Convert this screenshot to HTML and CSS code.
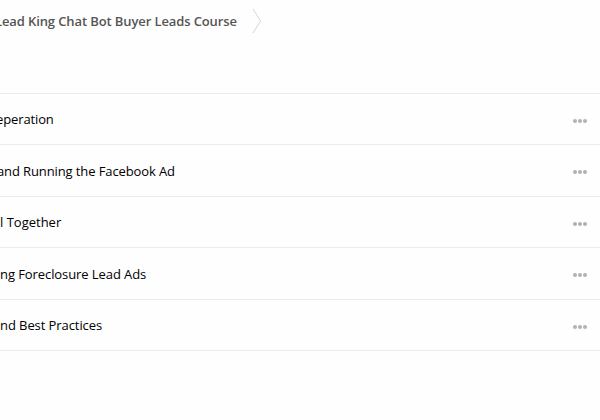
FILE: index.html
```html
<!DOCTYPE html>
<html lang="en">

<head>
    <meta charset="UTF-8">
    <meta name="viewport" content="width=device-width, initial-scale=1.0">
    <title>Course Sections</title>
    <link rel="stylesheet" href="styles.css">
</head>

<body>
    <header class="breadcrumb">
        <span class="breadcrumb-title">Lead King Chat Bot Buyer Leads Course</span>
        <svg class="breadcrumb-arrow" width="10" height="26" viewBox="0 0 10 26">
            <path d="M1 1L8.5 13L1 25" />
        </svg>
    </header>

    <ul class="section-list">
        <li class="section-row">
            <span class="section-title title-prep">eperation</span>
            <button class="menu-btn" aria-label="Options"><i></i><i></i><i></i></button>
        </li>
        <li class="section-row">
            <span class="section-title title-ad">and Running the Facebook Ad</span>
            <button class="menu-btn" aria-label="Options"><i></i><i></i><i></i></button>
        </li>
        <li class="section-row">
            <span class="section-title title-together">l Together</span>
            <button class="menu-btn" aria-label="Options"><i></i><i></i><i></i></button>
        </li>
        <li class="section-row">
            <span class="section-title">ng Foreclosure Lead Ads</span>
            <button class="menu-btn" aria-label="Options"><i></i><i></i><i></i></button>
        </li>
        <li class="section-row">
            <span class="section-title">nd Best Practices</span>
            <button class="menu-btn" aria-label="Options"><i></i><i></i><i></i></button>
        </li>
    </ul>
</body>

</html>
```
FILE: styles.css
```css
:root {
    --border-color: #ebebeb;
    --dot-color: #b2b2b2;
}

* {
    box-sizing: border-box;
}

body {
    font-family: 'Open Sans', sans-serif;
    font-size: 13px;
    color: #000;
    background-color: #fefefe;
    margin: 0;
    overflow: hidden;
}

.breadcrumb {
    display: flex;
    align-items: center;
    height: 42px;
    margin-bottom: 51px;
}

.breadcrumb-title {
    margin-left: -5px;
    font-weight: 600;
    letter-spacing: -0.11px;
    color: #555;
    white-space: nowrap;
}

.breadcrumb-arrow {
    margin-left: 15px;
    fill: none;
    stroke: #d4d4d4;
    stroke-width: 1;
}

.section-list {
    list-style: none;
    margin: 0;
    padding: 0;
    border-top: 1px solid var(--border-color);
}

.section-row {
    display: flex;
    align-items: center;
    justify-content: space-between;
    height: 51.49px;
    padding-right: 13px;
    border-bottom: 1px solid var(--border-color);
}

.section-title {
    letter-spacing: -0.08px;
    white-space: nowrap;
}

.title-prep {
    margin-left: -4px;
    letter-spacing: -0.12px;
}

.title-ad {
    margin-left: -3px;
    letter-spacing: -0.11px;
}

.title-together {
    letter-spacing: 0;
}

.menu-btn {
    display: flex;
    gap: 1px;
    margin-top: 3.4px;
    padding: 0;
    border: none;
    background: none;
    cursor: pointer;
}

.menu-btn i {
    width: 4px;
    height: 4px;
    border-radius: 50%;
    background-color: var(--dot-color);
}
```
